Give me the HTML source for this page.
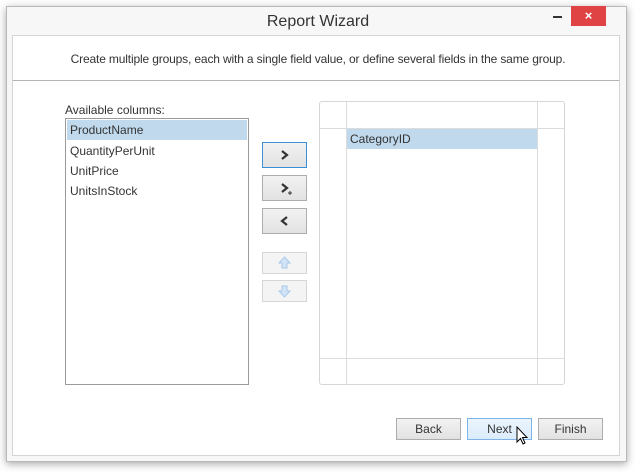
<!DOCTYPE html>
<html><head><style>
*{box-sizing:border-box;margin:0;padding:0}
body{width:636px;height:474px;background:#fff;font-family:"Liberation Sans",sans-serif;position:relative;overflow:hidden;color:#333}
.a{position:absolute}
.win{left:6px;top:6px;width:621px;height:456px;background:#f7f7f7;border:1px solid #b9b9b9;box-shadow:0 2px 8px rgba(0,0,0,.35)}
.btn{position:absolute;background:linear-gradient(#f2f2f2,#e2e2e2);border:1px solid #adadad;font-size:12px;text-align:center;line-height:20px;color:#333}
.btn svg{position:absolute;left:0;top:0}
.gl{position:absolute;background:#dcdcdc}
</style></head><body>
<div class="a win"></div>
<div class="a" style="left:0;top:13px;width:636px;text-align:center;font-size:16px;color:#333">Report Wizard</div>
<div class="a" style="left:553px;top:16px;width:9px;height:2px;background:#333"></div>
<div class="a" style="left:571px;top:6px;width:35px;height:20px;background:#e04343;color:#fff;font-size:13px;font-weight:bold;text-align:center;line-height:20px">×</div>
<div class="a" style="left:12px;top:35px;width:608px;height:421px;background:#fff;border:1px solid #d4d4d4"></div>
<div class="a" style="left:13px;top:80px;width:606px;height:1px;background:#b4b4b4"></div>
<div class="a" style="left:0;top:52px;width:636px;text-align:center;font-size:12px;color:#333;letter-spacing:-0.15px">Create multiple groups, each with a single field value, or define several fields in the same group.</div>
<div class="a" style="left:65px;top:103px;font-size:12px">Available columns:</div>
<div class="a" style="left:65px;top:118px;width:184px;height:267px;border:1px solid #9a9a9a;font-size:12px">
<div style="margin:1px;height:20px;background:#c0d9ec;padding-left:3px;line-height:20px">ProductName</div>
<div style="padding-left:4px;line-height:20px">QuantityPerUnit</div>
<div style="padding-left:4px;line-height:20px">UnitPrice</div>
<div style="padding-left:4px;line-height:20px">UnitsInStock</div>
</div>
<div class="btn" style="left:262px;top:142px;width:45px;height:26px;border-color:#3c8fd6"><svg width="43" height="24"><path d="M19 8 L24 12 L19 16" fill="none" stroke="#333" stroke-width="2.2"/></svg></div>
<div class="btn" style="left:262px;top:175px;width:45px;height:26px"><svg width="43" height="24"><path d="M19 8 L24 12 L19 16" fill="none" stroke="#333" stroke-width="2.2"/><path d="M25 17 h4 M27 15 v4" stroke="#333" stroke-width="1"/></svg></div>
<div class="btn" style="left:262px;top:208px;width:45px;height:26px"><svg width="43" height="24"><path d="M24 8 L19 12 L24 16" fill="none" stroke="#333" stroke-width="2.2"/></svg></div>
<div class="btn" style="left:262px;top:252px;width:45px;height:22px;border-color:#d6d6d6;background:#f4f4f4"><svg width="43" height="20"><path d="M21.5 4 L27 10 L24 10 L24 15 L19 15 L19 10 L16 10 Z" fill="#d2e5f7" stroke="#a9c8e8"/></svg></div>
<div class="btn" style="left:262px;top:280px;width:45px;height:22px;border-color:#d6d6d6;background:#f4f4f4"><svg width="43" height="20"><path d="M21.5 16 L27 10 L24 10 L24 5 L19 5 L19 10 L16 10 Z" fill="#d2e5f7" stroke="#a9c8e8"/></svg></div>
<div class="a" style="left:319px;top:101px;width:246px;height:284px;border:1px solid #d6d6d6;border-radius:3px"></div>
<div class="gl" style="left:346px;top:102px;width:1px;height:282px"></div>
<div class="gl" style="left:537px;top:102px;width:1px;height:282px"></div>
<div class="gl" style="left:320px;top:128px;width:244px;height:1px"></div>
<div class="gl" style="left:320px;top:358px;width:244px;height:1px"></div>
<div class="a" style="left:347px;top:129px;width:190px;height:20px;background:#c0d9ec;font-size:12px;line-height:20px;padding-left:3px">CategoryID</div>
<div class="btn" style="left:396px;top:418px;width:65px;height:22px">Back</div>
<div class="btn" style="left:467px;top:418px;width:65px;height:22px;background:linear-gradient(#eaf4fc,#dcecfc);border-color:#7eb4ea">Next</div>
<div class="btn" style="left:538px;top:418px;width:65px;height:22px">Finish</div>
<svg class="a" style="left:516px;top:426px" width="14" height="20" viewBox="0 0 14 20"><path d="M1 1 L1 16 L4.5 12.5 L7 18 L9 17 L6.5 11.5 L11 11.5 Z" fill="#fff" stroke="#000" stroke-width="1"/></svg>
</body></html>
